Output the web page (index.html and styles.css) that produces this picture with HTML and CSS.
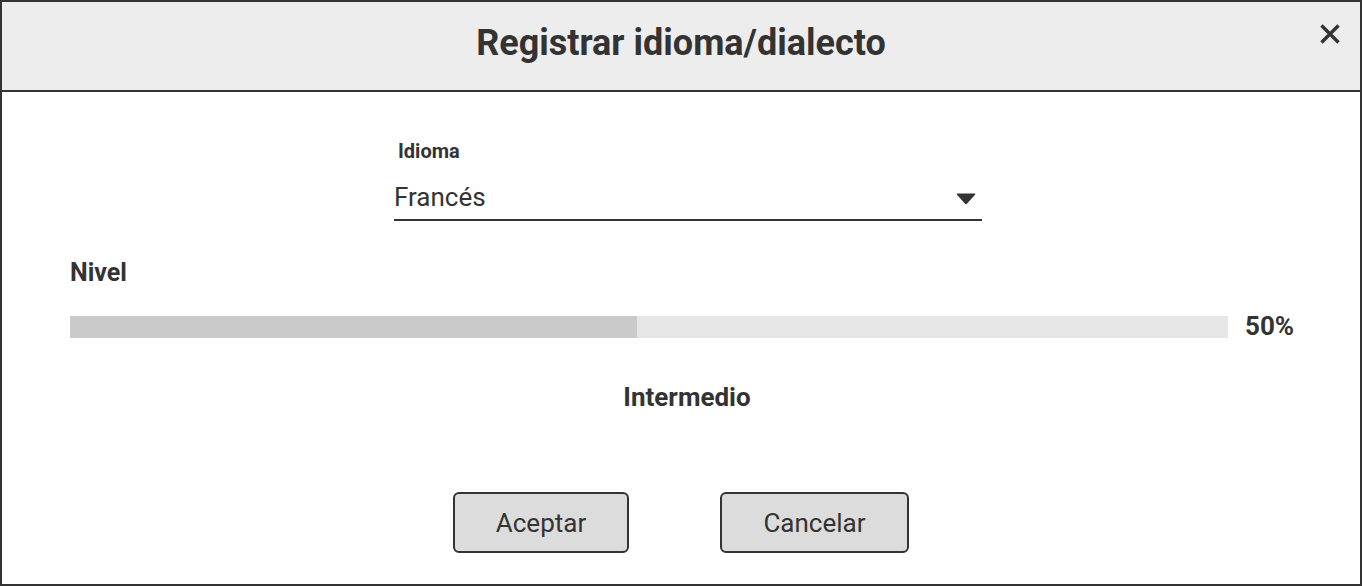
FILE: index.html
```html
<!DOCTYPE html>
<html lang="es">
<head>
<meta charset="utf-8">
<title>Registrar idioma/dialecto</title>
<link rel="stylesheet" href="styles.css">
</head>
<body>
<div class="dialog">
  <header class="dialog-header">
    <h1 class="dialog-title">Registrar idioma/dialecto</h1>
    <button class="close-btn" aria-label="Cerrar">
      <svg width="20" height="20" viewBox="0 0 20 20"><path d="M1.5 1.5 L18.5 18.5 M18.5 1.5 L1.5 18.5" stroke="#333" stroke-width="3.4" stroke-linecap="butt" fill="none"/></svg>
    </button>
  </header>
  <main class="dialog-body">
    <div class="field">
      <label class="field-label">Idioma</label>
      <div class="select">
        <span class="select-value">Francés</span>
        <svg class="select-arrow" width="20" height="12" viewBox="0 0 20 12"><path d="M1.5 0.5 H18.5 Q20 0.5 19 1.8 L11.2 10.6 Q10 11.8 8.8 10.6 L1 1.8 Q0 0.5 1.5 0.5 Z" fill="#333"/></svg>
      </div>
    </div>
    <div class="level">
      <div class="level-label">Nivel</div>
      <div class="progress-row">
        <div class="progress-track"><div class="progress-fill" style="width:49%"></div></div>
        <span class="progress-value">50%</span>
      </div>
      <div class="level-name">Intermedio</div>
    </div>
    <div class="actions">
      <button class="btn btn-accept">Aceptar</button>
      <button class="btn btn-cancel">Cancelar</button>
    </div>
  </main>
</div>
</body>
</html>
```
FILE: styles.css
```css
* { box-sizing: border-box; }
html, body { margin: 0; padding: 0; background: #fff; }
body { font-family: Roboto, "Liberation Sans", sans-serif; color: #333; }
.dialog {
  width: 1362px;
  height: 586px;
  border: 2px solid #333;
  display: flex;
  flex-direction: column;
}
.dialog-header {
  height: 90px;
  background: #ededed;
  border-bottom: 2px solid #333;
  display: flex;
  align-items: center;
  justify-content: center;
  position: relative;
}
.dialog-title {
  margin: 0;
  font-size: 36px;
  font-weight: 700;
  line-height: 1;
  padding-bottom: 6px;
}
.close-btn {
  position: absolute;
  top: 22px;
  right: 20px;
  width: 20px;
  height: 20px;
  padding: 0;
  border: 0;
  background: none;
  display: flex;
}
.dialog-body {
  flex: 1;
  display: flex;
  flex-direction: column;
}
.field {
  width: 588px;
  margin: 47px 0 0 392px;
  display: flex;
  flex-direction: column;
}
.field-label {
  font-size: 20px;
  font-weight: 700;
  line-height: 24px;
  padding-left: 4px;
}
.select {
  margin-top: 10px;
  height: 48px;
  padding-top: 2px;
  border-bottom: 2px solid #333;
  display: flex;
  align-items: center;
  justify-content: space-between;
  padding-right: 6px;
}
.select-value {
  font-size: 26px;
  line-height: 30px;
}
.select-arrow { margin-top: 4px; }
.level {
  padding: 37px 0 0 68px;
  display: flex;
  flex-direction: column;
}
.level-label {
  font-size: 25px;
  font-weight: 700;
  line-height: 30px;
}
.progress-row {
  margin-top: 23px;
  display: flex;
  align-items: center;
  gap: 17px;
}
.progress-track {
  width: 1158px;
  height: 22px;
  background: #e6e6e6;
}
.progress-fill {
  height: 100%;
  background: #cacaca;
}
.progress-value {
  font-size: 26px;
  font-weight: 700;
  line-height: 30px;
  padding-bottom: 2px;
}
.level-name {
  margin-top: 39px;
  padding-right: 68px;
  text-align: center;
  font-size: 26px;
  font-weight: 700;
  line-height: 30px;
  padding-left: 12px;
}
.actions {
  margin-top: 80px;
  display: flex;
  justify-content: center;
  gap: 91px;
}
.btn {
  height: 61px;
  border: 2px solid #333;
  border-radius: 6px;
  background: #dcdcdc;
  color: #333;
  font-family: Roboto, "Liberation Sans", sans-serif;
  font-size: 26px;
  padding: 0;
}
.btn-accept { width: 176px; }
.btn-cancel { width: 189px; }
```
